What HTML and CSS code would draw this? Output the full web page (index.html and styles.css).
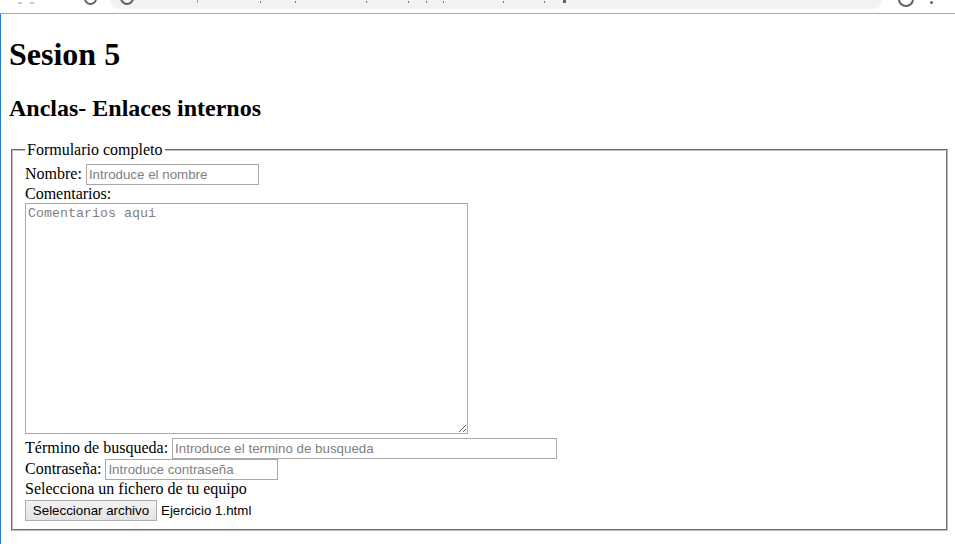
FILE: index.html
```html
<!DOCTYPE html>
<html lang="es">
<head>
<meta charset="utf-8">
<title>Sesion 5</title>
<link rel="stylesheet" href="styles.css">
</head>
<body>
<div class="chrome">
  <span class="nav nav-back"></span>
  <span class="nav nav-fwd"></span>
  <span class="nav nav-reload"></span>
  <div class="omnibox">
    <span class="info"></span>
    <span class="sep"></span>
    <span class="tick t1"></span>
    <span class="tick t2"></span>
    <span class="tick t3"></span>
    <span class="tick t4"></span>
    <span class="tick t5"></span>
    <span class="tick t6"></span>
    <span class="tick t7"></span>
    <span class="tick t8"></span>
    <span class="star"></span>
  </div>
  <span class="profile"></span>
  <span class="menu"></span>
</div>
<div class="viewport">
  <div class="page">
    <h1>Sesion 5</h1>
    <h2>Anclas- Enlaces internos</h2>
    <form>
      <fieldset>
        <legend>Formulario completo</legend>
        <label for="nombre">Nombre:</label> <input class="field field-short" type="text" id="nombre" placeholder="Introduce el nombre"><br>
        <label for="comentarios">Comentarios:</label><br>
        <textarea class="comments" id="comentarios" placeholder="Comentarios aqui"></textarea><br>
        <label for="busqueda">Término de busqueda:</label> <input class="field field-long" type="search" id="busqueda" placeholder="Introduce el termino de busqueda"><br>
        <label for="clave">Contraseña:</label> <input class="field field-short" type="password" id="clave" placeholder="Introduce contraseña"><br>
        <label>Selecciona un fichero de tu equipo</label><br>
        <span class="file"><button type="button" class="file-btn">Seleccionar archivo</button><span class="file-name">Ejercicio 1.html</span></span>
      </fieldset>
    </form>
  </div>
</div>
</body>
</html>
```
FILE: styles.css
```css
html, body {
  margin: 0;
  padding: 0;
  background: #fff;
}
body {
  font-family: "Liberation Serif", "Times New Roman", serif;
  font-size: 16px;
  color: #000;
  overflow: hidden;
  height: 544px;
}

/* browser chrome strip (cut off) */
.chrome {
  height: 13px;
  border-bottom: 1px solid #a8a8a8;
  display: flex;
  align-items: flex-start;
  overflow: hidden;
  background: #fff;
}
.nav {
  display: block;
  margin-top: -6px;
}
.nav-back {
  width: 4px;
  height: 8px;
  border-bottom: 2px solid #c8c8c8;
  margin-left: 18px;
}
.nav-fwd {
  width: 4px;
  height: 8px;
  border-bottom: 2px solid #c8c8c8;
  margin-left: 8px;
}
.nav-reload {
  width: 9px;
  height: 9px;
  border-radius: 50%;
  border: 2px solid #5f6368;
  margin-left: 50px;
  margin-top: -8px;
}
.omnibox {
  margin-left: 13px;
  width: 772px;
  height: 9px;
  background: #f1f3f4;
  border-radius: 0 0 14px 14px;
  display: flex;
  align-items: flex-start;
}
.info {
  width: 10px;
  height: 10px;
  border-radius: 50%;
  border: 2px solid #5f6368;
  margin-top: -9px;
  margin-left: 10px;
}
.sep {
  width: 1px;
  height: 3px;
  background: #9aa0a6;
  margin-left: 63px;
}
.tick {
  width: 1px;
  height: 2px;
  background: #a07050;
  margin-top: 1px;
}
.t1 { margin-left: 62px; }
.t2 { margin-left: 34px; }
.t3 { margin-left: 70px; }
.t4 { margin-left: 41px; }
.t5 { margin-left: 17px; }
.t6 { margin-left: 16px; }
.t7 { margin-left: 59px; }
.t8 { margin-left: 40px; }
.star {
  width: 3px;
  height: 3px;
  background: #5f6368;
  margin-left: 18px;
}
.profile {
  width: 12px;
  height: 12px;
  border-radius: 50%;
  border: 2px solid #5f6368;
  margin-left: 16px;
  margin-top: -9px;
}
.menu {
  width: 3px;
  height: 3px;
  border-radius: 50%;
  background: #5f6368;
  margin-left: 16px;
  margin-top: 1px;
}

/* page viewport */
.viewport {
  border-left: 1px solid #1a7fe0;
  height: 530px;
  display: flow-root;
}
.page {
  display: flow-root;
  padding: 0 5px 0 8px;
}
h1 {
  font-size: 32px;
  font-weight: bold;
  margin: 22px 0 22px;
}
h2 {
  font-size: 24px;
  font-weight: bold;
  margin: 20px 0 19px;
}
form {
  margin: 0;
}
fieldset {
  margin: 0 2px;
  padding: 5px 12px 8px;
  border: 2px groove #c0c0c0;
}
legend {
  padding: 0 2px;
}
.field {
  box-sizing: border-box;
  height: 21px;
  border: 1px solid #a9a9a9;
  padding: 1px 2px;
  font-family: "Liberation Sans", Arial, sans-serif;
  font-size: 13.33px;
  background: #fff;
  margin: 0;
  vertical-align: baseline;
  -webkit-appearance: none;
  appearance: none;
  border-radius: 0;
  outline: none;
}
.field::placeholder {
  color: #808080;
}
.field-short {
  width: 173px;
}
.field-long {
  width: 385px;
}
.comments {
  box-sizing: border-box;
  width: 443px;
  height: 231px;
  border: 1px solid #a9a9a9;
  padding: 2px;
  margin: 0;
  font-family: "Liberation Mono", "Courier New", monospace;
  font-size: 13.33px;
  resize: both;
  vertical-align: baseline;
  outline: none;
}
.comments::placeholder {
  color: #808080;
}
.file {
  display: inline-flex;
  align-items: center;
  margin-top: 2px;
}
.file-btn {
  box-sizing: border-box;
  height: 21px;
  width: 132px;
  padding: 0 6px;
  margin: 0;
  border: 1px solid #adadad;
  border-radius: 0;
  background: linear-gradient(#f2f2f2, #e3e3e3);
  font-family: "Liberation Sans", Arial, sans-serif;
  font-size: 13.33px;
  color: #000;
}
.file-name {
  font-family: "Liberation Sans", Arial, sans-serif;
  font-size: 13.33px;
  margin-left: 4px;
}
```
